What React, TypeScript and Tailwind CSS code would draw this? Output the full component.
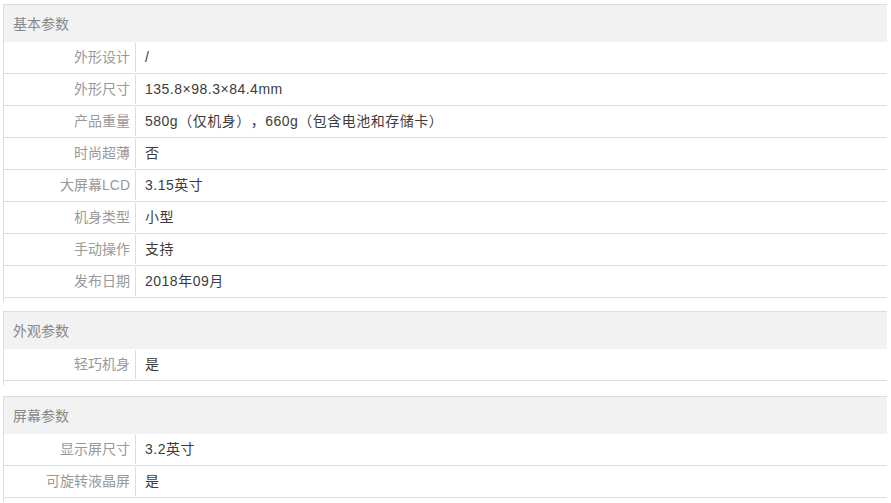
import React from "react";

type Section = { title: string; rows: [string, string][] };

const sections: Section[] = [
  {
    title: "基本参数",
    rows: [
      ["外形设计", "/"],
      ["外形尺寸", "135.8×98.3×84.4mm"],
      ["产品重量", "580g（仅机身），660g（包含电池和存储卡）"],
      ["时尚超薄", "否"],
      ["大屏幕LCD", "3.15英寸"],
      ["机身类型", "小型"],
      ["手动操作", "支持"],
      ["发布日期", "2018年09月"],
    ],
  },
  { title: "外观参数", rows: [["轻巧机身", "是"]] },
  {
    title: "屏幕参数",
    rows: [
      ["显示屏尺寸", "3.2英寸"],
      ["可旋转液晶屏", "是"],
    ],
  },
];

export default function App() {
  return (
    <div
      className="w-[891px] h-[503px] overflow-hidden bg-white pt-[4px] pl-[3px] [text-spacing-trim:space-all]"
      style={{ fontFamily: '"Liberation Sans", "Noto Sans CJK SC", sans-serif' }}
    >
      {sections.map((s, i) => (
        <div
          key={s.title}
          className={`w-[884px] border-l border-t border-[#dddddd] pb-[4px] ${i === 0 ? "mb-[9px]" : "mb-[11px]"}`}
        >
          <div className="h-[37px] bg-[#f2f2f2] pl-[9px] pt-[2px] flex items-center text-[14px] text-[#888888]">
            {s.title}
          </div>
          {s.rows.map(([k, v]) => (
            <div key={k} className="h-[32px] border-b border-[#dddddd] flex items-start">
              <div className="w-[132px] h-[29px] mt-[1px] border-r border-[#dddddd] pr-[5px] flex items-center justify-end text-[14px] text-[#999999]">
                {k}
              </div>
              <div className="h-[31px] pl-[9px] flex items-center text-[14px] tracking-[0.5px] text-[#3c3c3c]">{v}</div>
            </div>
          ))}
        </div>
      ))}
    </div>
  );
}
